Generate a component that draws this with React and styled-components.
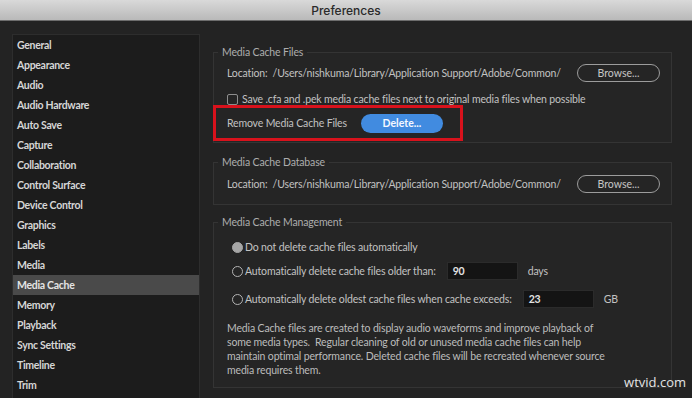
import React from 'react';
import styled, { createGlobalStyle } from 'styled-components';

const GlobalStyle = createGlobalStyle`
  body {
    margin: 0;
    background: #232323;
    font-family: Lato, "Open Sans", sans-serif;
  }
`;

const Window = styled.div`
  position: relative;
  width: 692px;
  height: 398px;
  overflow: hidden;
  display: flex;
  flex-direction: column;
  background: #232323;
`;

const TitleBar = styled.div`
  height: 20px;
  flex: none;
  display: flex;
  align-items: center;
  justify-content: center;
  background: linear-gradient(#d9d9d9, #b9b9b9);
  border-bottom: 1px solid #6d6d6d;
  font-family: Inter, sans-serif;
  font-size: 12px;
  font-weight: 500;
  color: #2a2a2a;
`;

const Body = styled.div`
  flex: 1;
  display: flex;
  padding: 13px 0 0 12px;
  min-height: 0;
`;

const Sidebar = styled.ul`
  list-style: none;
  margin: 0;
  padding: 0;
  width: 186px;
  flex: none;
  background: #1c1c1c;
  border: 1px solid #2d2d2d;
  border-bottom: none;
  overflow: hidden;
`;

const NavItem = styled.li`
  height: 20px;
  line-height: 20px;
  padding-left: 4px;
  font-size: 10.5px;
  font-weight: 700;
  letter-spacing: -0.3px;
  color: ${p => (p.$active ? '#e4e4e4' : '#d6d6d6')};
  background: ${p => (p.$active ? '#4a4a4a' : 'transparent')};
`;

const Content = styled.div`
  width: 459px;
  margin-left: 13px;
  display: flex;
  flex-direction: column;
  font-size: 10.5px;
  letter-spacing: -0.15px;
`;

const Section = styled.fieldset`
  margin: ${p => p.$top}px 0 0;
  padding: ${p => p.$pt}px 11px ${p => p.$pb}px 13px;
  border: 1px solid #343434;
  background: #252525;
  min-width: 0;
`;

const Legend = styled.legend`
  margin-left: -9px;
  padding: 0 4px;
  height: 14px;
  line-height: 14px;
  color: #adadad;
`;

const Row = styled.div`
  display: flex;
  align-items: center;
  height: ${p => p.$h || 20}px;
  margin-top: ${p => p.$mt || 0}px;
  color: #c2c2c2;
  white-space: nowrap;
`;

const LocationRow = styled(Row)`
  justify-content: space-between;
`;

const Highlight = styled.div`
  display: flex;
  align-items: center;
  gap: 14px;
  height: 30px;
  width: 233px;
  margin-left: -14px;
  padding-left: 11px;
  border: 3px solid #d8121c;
  color: #c2c2c2;
  white-space: nowrap;
`;

const Browse = styled.button`
  flex: none;
  width: 83px;
  height: 18px;
  padding: 0;
  border: 1.5px solid #9c9c9c;
  border-radius: 9px;
  background: transparent;
  color: #c6c6c6;
  font-family: inherit;
  font-size: 10.5px;
`;

const Delete = styled.button`
  flex: none;
  width: 82px;
  height: 19px;
  padding: 0;
  border: none;
  border-radius: 10px;
  background: #418be0;
  color: #f4f8ff;
  font-family: inherit;
  font-size: 10.5px;
  font-weight: 700;
`;

const Checkbox = styled.span`
  width: 9px;
  height: 9px;
  border: 1px solid #8e8e8e;
  border-radius: 2px;
  margin-right: 4px;
`;

const Radio = styled.span`
  box-sizing: border-box;
  flex: none;
  width: 11px;
  height: 11px;
  margin: 0 2px 0 5px;
  border-radius: 50%;
  border: 1.5px solid ${p => (p.$on ? '#a6a6a6' : '#b4b4b4')};
  background: ${p => (p.$on ? '#a6a6a6' : 'transparent')};
`;

const NumberBox = styled.span`
  box-sizing: border-box;
  width: 71px;
  height: 18px;
  margin-left: 11px;
  padding-left: 5px;
  line-height: 16px;
  background: #141414;
  border: 1px solid #2b2b2b;
  color: #e2e2e2;
  font-weight: 700;
`;

const Unit = styled.span`
  margin-left: 10px;
`;

const Note = styled.p`
  margin: 13px 0 0;
  line-height: 14px;
  color: #bcbcbc;
  white-space: nowrap;
`;

const Watermark = styled.div`
  position: absolute;
  right: 6px;
  bottom: 7px;
  font-family: "Open Sans", sans-serif;
  font-size: 13px;
  color: #e4e4e4;
`;

const nav = [
  'General', 'Appearance', 'Audio', 'Audio Hardware', 'Auto Save', 'Capture',
  'Collaboration', 'Control Surface', 'Device Control', 'Graphics', 'Labels',
  'Media', 'Media Cache', 'Memory', 'Playback', 'Sync Settings', 'Timeline', 'Trim',
];

const path = 'Location:\u00a0\u00a0/Users/nishkuma/Library/Application Support/Adobe/Common/';

export default function App() {
  return (
    <Window>
      <GlobalStyle />
      <TitleBar>Preferences</TitleBar>
      <Body>
        <Sidebar>
          {nav.map(n => (
            <NavItem key={n} $active={n === 'Media Cache'}>{n}</NavItem>
          ))}
        </Sidebar>
        <Content>
          <Section $top={11} $pt={4} $pb={1}>
            <Legend>Media Cache Files</Legend>
            <LocationRow>
              <span>{path}</span>
              <Browse>Browse...</Browse>
            </LocationRow>
            <Row $h={12} $mt={10}>
              <Checkbox />
              Save .cfa and .pek media cache files next to original media files when possible
            </Row>
            <Highlight>
              Remove Media Cache Files
              <Delete>Delete...</Delete>
            </Highlight>
          </Section>

          <Section $top={12} $pt={5} $pb={10}>
            <Legend>Media Cache Database</Legend>
            <LocationRow>
              <span>{path}</span>
              <Browse>Browse...</Browse>
            </LocationRow>
          </Section>

          <Section $top={10} $pt={9} $pb={10}>
            <Legend>Media Cache Management</Legend>
            <Row $h={18}>
              <Radio $on />
              Do not delete cache files automatically
            </Row>
            <Row $h={18} $mt={6}>
              <Radio />
              Automatically delete cache files older than:
              <NumberBox>90</NumberBox>
              <Unit>days</Unit>
            </Row>
            <Row $h={18} $mt={10}>
              <Radio />
              Automatically delete oldest cache files when cache exceeds:
              <NumberBox>23</NumberBox>
              <Unit>GB</Unit>
            </Row>
            <Note>
              Media Cache files are created to display audio waveforms and improve playback of<br />
              some media types.&nbsp; Regular cleaning of old or unused media cache files can help<br />
              maintain optimal performance. Deleted cache files will be recreated whenever source<br />
              media requires them.
            </Note>
          </Section>
        </Content>
      </Body>
      <Watermark>wtvid.com</Watermark>
    </Window>
  );
}
